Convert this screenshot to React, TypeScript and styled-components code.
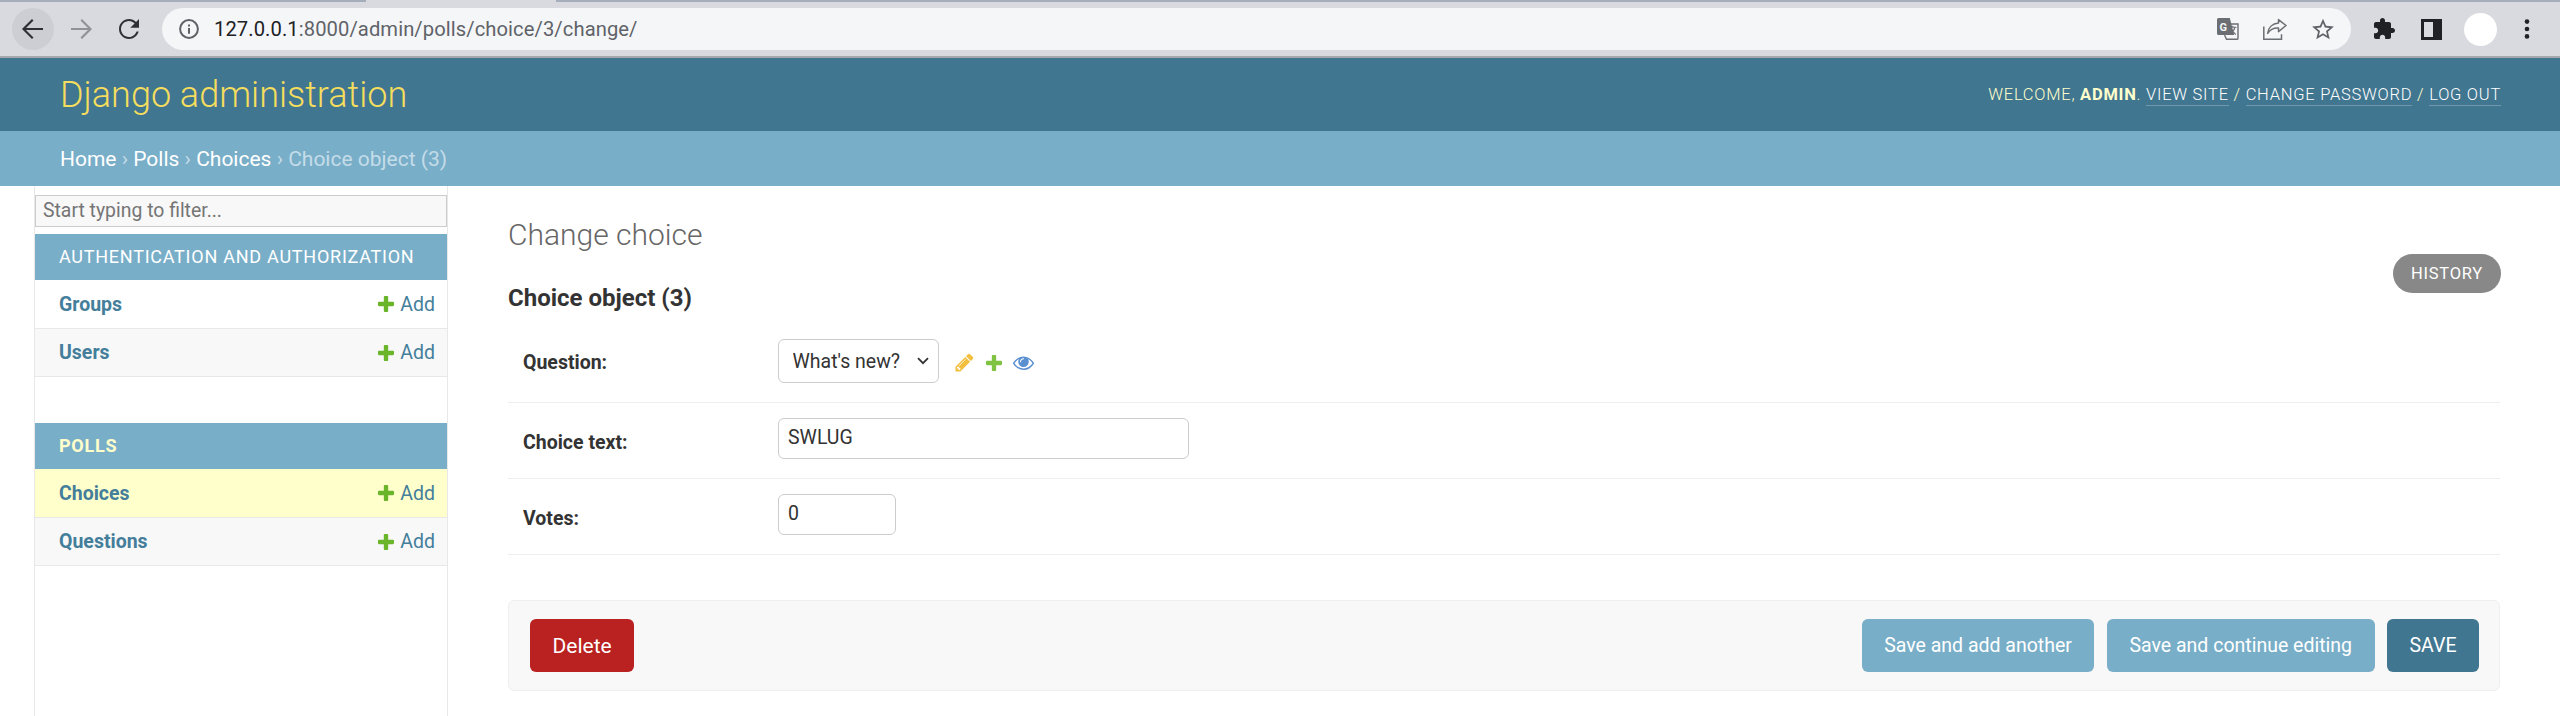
import React from 'react';
import styled, { createGlobalStyle } from 'styled-components';

const Global = createGlobalStyle`
  html, body { margin: 0; padding: 0; height: 100%; overflow: hidden; background: #fff; }
  body { font-family: Roboto, "Liberation Sans", Arial, sans-serif; font-size: 21px; color: #333; }
  #root { height: 100%; }
  * { box-sizing: border-box; }
`;

const Page = styled.div`
  display: flex;
  flex-direction: column;
  height: 716px;
  overflow: hidden;
`;

/* browser chrome */
const TabStrip = styled.div`
  display: flex;
  flex: none;
  height: 2px;
  background: #d9dadf;
`;
const TabEdge = styled.div<{ $w?: number }>`
  background: #a6aebb;
  ${(p) => (p.$w ? `width: ${p.$w}px;` : 'flex: 1;')}
  ${(p) => (p.$w ? 'margin-right: 190px;' : '')}
`;
const Toolbar = styled.div`
  display: flex;
  align-items: flex-start;
  flex: none;
  height: 56px;
  padding: 6px 0 0 12px;
  background: #d9dadf;
  border-bottom: 2px solid #a5a7ac;
`;
const NavButton = styled.div<{ $active?: boolean; $w?: number }>`
  display: flex;
  align-items: center;
  justify-content: center;
  flex: none;
  width: ${(p) => p.$w ?? 42}px;
  height: 42px;
  border-radius: 50%;
  background: ${(p) => (p.$active ? '#cdced3' : 'transparent')};
`;
const Omnibox = styled.div`
  display: flex;
  align-items: center;
  flex: none;
  width: 2189px;
  height: 42px;
  margin-left: 12px;
  padding: 0 0 0 16px;
  border-radius: 21px;
  background: #f5f6f8;
`;
const Url = styled.span`
  margin-left: 14px;
  font-size: 20.2px;
  color: #5f6368;
  white-space: nowrap;
  letter-spacing: 0.08px;
`;
const Host = styled.span`
  color: #202124;
`;
const OmniActions = styled.div`
  display: flex;
  align-items: center;
  gap: 24px;
  margin-left: auto;
  margin-right: 16px;
`;
const ToolActions = styled.div`
  display: flex;
  align-items: center;
  flex: none;
  height: 42px;
  margin-left: 22px;
`;
const Avatar = styled.div`
  flex: none;
  width: 33px;
  height: 33px;
  margin: 0 27px 0 22px;
  border-radius: 50%;
  background: #fff;
`;

/* django header */
const Header = styled.header`
  display: flex;
  align-items: center;
  justify-content: space-between;
  flex: none;
  height: 73px;
  padding: 0 59px 0 60px;
  background: #417690;
`;
const Branding = styled.h1`
  margin: 0;
  font-size: 36px;
  font-weight: 300;
  color: #f5dd5d;
`;
const UserTools = styled.div`
  font-size: 16.5px;
  font-weight: 300;
  letter-spacing: 0.75px;
  text-transform: uppercase;
  color: #ffc;
  strong {
    font-weight: 700;
  }
`;
const UserLink = styled.a`
  color: #fff;
  border-bottom: 1.5px solid rgba(255, 255, 255, 0.25);
  padding-bottom: 1px;
`;
const Breadcrumbs = styled.nav`
  display: flex;
  align-items: center;
  flex: none;
  height: 55px;
  padding: 0 60px;
  background: #79aec8;
  font-size: 21px;
  color: #c4dce8;
  white-space: pre;
`;
const Crumb = styled.a`
  color: #fff;
`;

/* body */
const Body = styled.div`
  display: flex;
  flex: 1;
  min-height: 0;
`;
const Sidebar = styled.aside`
  flex: none;
  width: 414px;
  margin-left: 34px;
  padding-top: 9px;
  border-left: 1.5px solid #e8e8e8;
  border-right: 1.5px solid #e8e8e8;
`;
const Filter = styled.input`
  display: block;
  width: 100%;
  height: 32px;
  margin-bottom: 7px;
  padding: 0 7px 1px;
  background: #f8f8f8;
  border: 1.5px solid #ccc;
  outline: none;
  font-family: inherit;
  font-size: 19.4px;
  color: #333;
  &::placeholder {
    color: #757575;
  }
`;
const Module = styled.section`
  margin-bottom: 46px;
`;
const Caption = styled.div<{ $current?: boolean }>`
  display: flex;
  align-items: center;
  height: 46px;
  padding: 0 0 1px 24px;
  background: #79aec8;
  font-size: 18px;
  letter-spacing: 0.75px;
  text-transform: uppercase;
  font-weight: ${(p) => (p.$current ? 700 : 400)};
  color: ${(p) => (p.$current ? '#ffc' : '#fff')};
`;
const ModelRow = styled.div<{ $bg: string }>`
  display: flex;
  align-items: center;
  justify-content: space-between;
  height: 48.5px;
  padding: 1px 12px 0 24px;
  background: ${(p) => p.$bg};
  border-bottom: 1.5px solid #e8e8e8;
  font-size: 19.5px;
`;
const ModelName = styled.a`
  font-weight: 700;
  color: #447e9b;
`;
const AddLink = styled.a`
  display: flex;
  align-items: center;
  gap: 6px;
  color: #447e9b;
`;

const Main = styled.main`
  flex: 1;
  min-width: 0;
  padding: 30px 60px 0;
`;
const TitleRow = styled.div`
  display: flex;
  align-items: flex-start;
  justify-content: space-between;
  height: 38px;
  margin-bottom: 29px;
`;
const Title = styled.h1`
  margin: 0;
  font-size: 30px;
  line-height: 38px;
  font-weight: 300;
  color: #666;
`;
const HistoryPill = styled.a`
  display: flex;
  align-items: center;
  height: 39px;
  margin: 38px -1px 0 0;
  padding: 0 18px;
  border-radius: 22px;
  background: #888;
  color: #fff;
  font-size: 16.5px;
  letter-spacing: 0.75px;
  text-transform: uppercase;
`;
const Legend = styled.h2`
  margin: 0 0 11px;
  font-size: 24px;
  line-height: 30px;
  font-weight: 700;
  color: #333;
`;
const FormRow = styled.div`
  display: flex;
  align-items: flex-start;
  padding: 15px 15px 19px;
  border-bottom: 1.5px solid #eee;
`;
const Label = styled.label<{ $top: number }>`
  flex: none;
  width: 255px;
  padding-top: ${(p) => p.$top}px;
  font-size: 19.5px;
  line-height: 24px;
  font-weight: 700;
  color: #333;
`;
const Select = styled.select`
  appearance: none;
  width: 161px;
  height: 44px;
  padding: 0 10.5px 0 13.5px;
  background: #fff
    url("data:image/svg+xml,%3Csvg xmlns='http://www.w3.org/2000/svg' width='12' height='8' viewBox='0 0 12 8'%3E%3Cpath d='M1 1.2l5 5 5-5' fill='none' stroke='%23333' stroke-width='1.8'/%3E%3C/svg%3E")
    no-repeat right 9px center;
  border: 1.5px solid #ccc;
  border-radius: 6px;
  font-family: inherit;
  font-size: 19.5px;
  color: #333;
`;
const TextField = styled.input<{ $w: number }>`
  display: block;
  width: ${(p) => p.$w}px;
  height: 41px;
  padding: 0 9px 2px;
  border: 1.5px solid #ccc;
  border-radius: 6px;
  outline: none;
  font-family: inherit;
  font-size: 19.5px;
  color: #333;
`;
const RelatedLinks = styled.div`
  display: flex;
  align-items: center;
  gap: 11px;
  height: 44px;
  margin-left: 14.5px;
  padding-top: 3px;
`;
const SubmitRow = styled.div`
  display: flex;
  align-items: center;
  gap: 12.5px;
  height: 91px;
  margin-top: 45px;
  padding: 0 20px 0 21px;
  background: #f8f8f8;
  border: 1.5px solid #eee;
  border-radius: 6px;
`;
const ActionButton = styled.button<{ $bg: string; $push?: boolean; $size?: number }>`
  flex: none;
  height: 53px;
  padding: 0 22.5px;
  border: 0;
  border-radius: 6px;
  background: ${(p) => p.$bg};
  color: #fff;
  font-family: inherit;
  font-size: ${(p) => p.$size ?? 19.5}px;
  ${(p) => (p.$push ? 'margin-right: auto;' : '')}
`;

/* icons */
const PLUS =
  'M1600 796v192q0 40-28 68t-68 28h-416v416q0 40-28 68t-68 28h-192q-40 0-68-28t-28-68v-416h-416q-40 0-68-28t-28-68v-192q0-40 28-68t68-28h416v-416q0-40 28-68t68-28h192q40 0 68 28t28 68v416h416q40 0 68 28t28 68z';

const PlusIcon = ({ size, color }: { size: number; color: string }) => (
  <svg width={size} height={size} viewBox="192 192 1408 1408" aria-hidden>
    <path fill={color} d={PLUS} />
  </svg>
);
const PencilIcon = () => (
  <svg width="21" height="21" viewBox="0 0 1792 1792" aria-hidden>
    <path
      fill="#f3bf3e"
      d="M491 1536l91-91-235-235-91 91v107h128v128h107zm523-928q0-22-22-22-10 0-17 7l-542 542q-7 7-7 17 0 22 22 22 10 0 17-7l542-542q7-7 7-17zm-54-192l416 416-832 832h-416v-416zm683 96q0 53-37 90l-166 166-416-416 166-165q36-38 90-38 53 0 91 38l235 234q37 39 37 91z"
    />
  </svg>
);
const EyeIcon = () => (
  <svg width="21" height="21" viewBox="0 0 1792 1792" aria-hidden>
    <path
      fill="#5a8fd0"
      d="M1664 960q-152-236-381-353 61 104 61 225 0 185-131.500 316.500t-316.500 131.500-316.500-131.500-131.500-316.500q0-121 61-225-229 117-381 353 133 205 333.500 326.500t434.500 121.500 434.500-121.500 333.500-326.500zm-720-384q0-20-14-34t-34-14q-125 0-214.500 89.500t-89.500 214.500q0 20 14 34t34 14 34-14 14-34q0-86 61-147t147-61q20 0 34-14t14-34zm848 384q0 34-20 69-140 230-376.500 368.500t-499.500 138.500-499.500-139-376.500-368q-20-35-20-69t20-69q140-229 376.500-368t499.500-139 499.500 139 376.500 368q20 35 20 69z"
    />
  </svg>
);
const BackIcon = ({ color }: { color: string }) => (
  <svg width="30" height="30" viewBox="0 0 24 24" fill="none" stroke={color} strokeWidth="1.7" aria-hidden>
    <path d="M20 12H4.6M11.8 4.6 4.4 12l7.4 7.4" />
  </svg>
);
const ForwardIcon = () => (
  <svg width="30" height="30" viewBox="0 0 24 24" fill="none" stroke="#8f9296" strokeWidth="1.7" aria-hidden>
    <path d="M4 12h15.4M12.2 4.6l7.4 7.4-7.4 7.4" />
  </svg>
);
const ReloadIcon = () => (
  <svg width="30" height="30" viewBox="0 0 24 24" aria-hidden>
    <path
      fill="#2f3033"
      d="M17.65 6.35C16.2 4.9 14.21 4 12 4c-4.42 0-7.99 3.58-7.99 8s3.57 8 7.99 8c3.73 0 6.84-2.55 7.73-6h-1.7c-.82 2.33-3.04 4.4-6.03 4.4-3.53 0-6.4-2.87-6.4-6.4S8.47 5.6 12 5.6c1.77 0 3.34.74 4.49 1.91L13 11h7V4l-2.35 2.35z"
    />
  </svg>
);
const InfoIcon = () => (
  <svg width="22" height="22" viewBox="0 0 24 24" fill="none" aria-hidden>
    <circle cx="12" cy="12" r="9.7" stroke="#5f6368" strokeWidth="2.2" />
    <path d="M12 10.8v6.4M12 7v2.2" stroke="#5f6368" strokeWidth="2.2" />
  </svg>
);
const TranslateIcon = () => (
  <svg width="22" height="22" viewBox="0 0 22 22" aria-hidden>
    <path fill="#f5f6f8" stroke="#6b6e72" strokeWidth="1.4" d="M5 6h16v14.6a.7.7 0 0 1-.7.7H9.5L8 18z" />
    <path fill="#6b6e72" d="M1.5 0h11.3L17.2 17H1.5A1.5 1.5 0 0 1 0 15.500V1.500A1.500 1.500 0 0 1 1.500 0z" />
    <text x="2.6" y="12.500" fontFamily="Roboto, sans-serif" fontWeight="700" fontSize="11" fill="#f5f6f8">
      G
    </text>
    <path d="M12.500 9.200h7M15.800 7.800v1.400M18 9.200c-.8 3.200-2.600 5.600-5 7M14 10.500c.9 2.600 2.500 4.500 4.800 6" fill="none" stroke="#6b6e72" strokeWidth="1.1" />
  </svg>
);
const ShareIcon = () => (
  <svg width="24" height="22" viewBox="0 0 24 22" fill="none" stroke="#6b6e72" strokeWidth="1.5" aria-hidden>
    <path d="M.8 8.500v12.700h17.700v-5" />
    <path d="M15.500 1.600 23 7.500l-7.500 6.100V10c-4.600-.3-8.300 1.400-10.800 5.400C5.300 9.700 9.300 5.500 15.500 5z" strokeLinejoin="round" />
  </svg>
);
const StarIcon = () => (
  <svg width="24" height="24" viewBox="1 1.500 22 20" aria-hidden>
    <path
      fill="#5f6368"
      d="M22 9.240l-7.190-.62L12 2 9.190 8.630 2 9.240l5.460 4.730L5.820 21 12 17.270 18.180 21l-1.630-7.030L22 9.240zM12 15.400l-3.760 2.270 1-4.280-3.320-2.880 4.380-.38L12 6.100l1.710 4.040 4.380.38-3.320 2.880 1 4.280L12 15.400z"
    />
  </svg>
);
const PuzzleIcon = () => (
  <svg width="22" height="22" viewBox="1 1 22 22" aria-hidden>
    <path
      fill="#202124"
      d="M20.500 11H19V7c0-1.100-.9-2-2-2h-4V3.500C13 2.120 11.880 1 10.500 1S8 2.120 8 3.500V5H4c-1.100 0-1.990.9-1.990 2v3.800H3.500c1.490 0 2.700 1.210 2.700 2.700s-1.210 2.700-2.700 2.700H2V20c0 1.100.9 2 2 2h3.800v-1.500c0-1.490 1.210-2.700 2.700-2.700 1.490 0 2.700 1.210 2.700 2.700V22H17c1.100 0 2-.9 2-2v-4h1.500c1.380 0 2.500-1.120 2.500-2.500S21.880 11 20.500 11z"
    />
  </svg>
);
const PanelGlyph = styled.svg`
  flex: none;
  margin-left: 26px;
`;
const PanelIcon = () => (
  <PanelGlyph width="21" height="21" viewBox="0 0 21 21" aria-hidden>
    <path fill="#202124" fillRule="evenodd" d="M0 0h21v21H0zM3 3v15h9V3z" />
  </PanelGlyph>
);
const DotsIcon = () => (
  <svg width="6" height="20" viewBox="0 0 6 20" aria-hidden>
    <circle cx="3" cy="2.600" r="2.300" fill="#202124" />
    <circle cx="3" cy="10" r="2.300" fill="#202124" />
    <circle cx="3" cy="17.400" r="2.300" fill="#202124" />
  </svg>
);

const modules = [
  {
    name: 'Authentication and Authorization',
    rows: [
      { name: 'Groups', bg: '#fff' },
      { name: 'Users', bg: '#f8f8f8' },
    ],
  },
  {
    name: 'Polls',
    current: true,
    rows: [
      { name: 'Choices', bg: '#ffc' },
      { name: 'Questions', bg: '#f8f8f8' },
    ],
  },
];

export default function App() {
  return (
    <Page>
      <Global />
      <TabStrip>
        <TabEdge $w={366} />
        <TabEdge />
      </TabStrip>
      <Toolbar>
        <NavButton $active>
          <BackIcon color="#2f3033" />
        </NavButton>
        <NavButton $w={54}>
          <ForwardIcon />
        </NavButton>
        <NavButton>
          <ReloadIcon />
        </NavButton>
        <Omnibox>
          <InfoIcon />
          <Url>
            <Host>127.0.0.1</Host>:8000/admin/polls/choice/3/change/
          </Url>
          <OmniActions>
            <TranslateIcon />
            <ShareIcon />
            <StarIcon />
          </OmniActions>
        </Omnibox>
        <ToolActions>
          <PuzzleIcon />
          <PanelIcon />
          <Avatar />
          <DotsIcon />
        </ToolActions>
      </Toolbar>
      <Header>
        <Branding>Django administration</Branding>
        <UserTools>
          Welcome, <strong>admin</strong>. <UserLink>View site</UserLink> / <UserLink>Change password</UserLink> /{' '}
          <UserLink>Log out</UserLink>
        </UserTools>
      </Header>
      <Breadcrumbs>
        <Crumb>Home</Crumb> › <Crumb>Polls</Crumb> › <Crumb>Choices</Crumb> › Choice object (3)
      </Breadcrumbs>
      <Body>
        <Sidebar>
          <Filter placeholder="Start typing to filter..." />
          {modules.map((m) => (
            <Module key={m.name}>
              <Caption $current={m.current}>{m.name}</Caption>
              {m.rows.map((r) => (
                <ModelRow key={r.name} $bg={r.bg}>
                  <ModelName>{r.name}</ModelName>
                  <AddLink>
                    <PlusIcon size={16} color="#6ab52a" />
                    Add
                  </AddLink>
                </ModelRow>
              ))}
            </Module>
          ))}
        </Sidebar>
        <Main>
          <TitleRow>
            <Title>Change choice</Title>
            <HistoryPill>History</HistoryPill>
          </TitleRow>
          <Legend>Choice object (3)</Legend>
          <FormRow>
            <Label $top={12}>Question:</Label>
            <Select defaultValue="1">
              <option value="1">What's new?</option>
            </Select>
            <RelatedLinks>
              <PencilIcon />
              <PlusIcon size={16} color="#80c342" />
              <EyeIcon />
            </RelatedLinks>
          </FormRow>
          <FormRow>
            <Label $top={12.5}>Choice text:</Label>
            <TextField $w={411} defaultValue="SWLUG" />
          </FormRow>
          <FormRow>
            <Label $top={12.5}>Votes:</Label>
            <TextField $w={118} defaultValue="0" />
          </FormRow>
          <SubmitRow>
            <ActionButton $bg="#ba2121" $push $size={21}>
              Delete
            </ActionButton>
            <ActionButton $bg="#79aec8">Save and add another</ActionButton>
            <ActionButton $bg="#79aec8">Save and continue editing</ActionButton>
            <ActionButton $bg="#417690">SAVE</ActionButton>
          </SubmitRow>
        </Main>
      </Body>
    </Page>
  );
}
